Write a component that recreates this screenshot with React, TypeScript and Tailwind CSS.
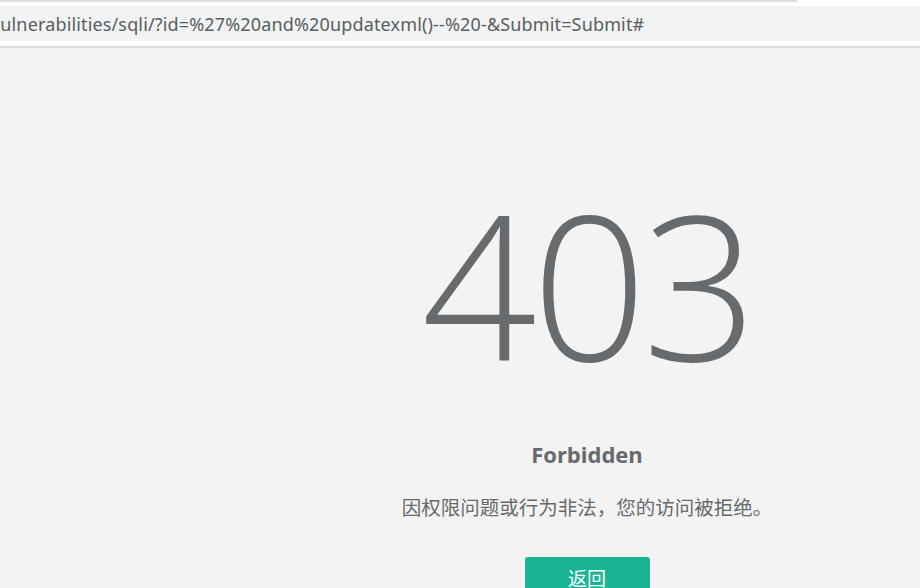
export default function App() {
  return (
    <div className="w-[920px] h-[588px] overflow-hidden bg-[#f3f3f3] flex flex-col">
      <div className="bg-white flex flex-col shrink-0">
        <div className="h-[2px] w-[797px] bg-[#dcdde0]" />
        <div className="h-[4px]" />
        <div
          className="h-[35px] bg-[#f1f3f4] flex items-center whitespace-nowrap overflow-hidden text-[18px] tracking-[0.15px] text-[#5a5d61] ml-[-9px] pt-[1px]"
          style={{ fontFamily: '"Noto Sans", "Open Sans", sans-serif' }}
        >
          vulnerabilities/sqli/?id=%27%20and%20updatexml()--%20-&amp;Submit=Submit#
        </div>
        <div className="h-[5px]" />
        <div className="h-[2px] bg-[#dadbde]" />
      </div>
      <div
        className="flex-1 flex flex-col items-center pl-[254px]"
        style={{ fontFamily: '"Open Sans", "Noto Sans", "Noto Sans CJK SC", sans-serif' }}
      >
        <div className="mt-[135px] h-[200px] flex items-center text-[202px] font-light leading-none text-[#686b6e] tracking-[-5px] pr-[-5px]">
          403
        </div>
        <div className="mt-[56px] text-[22px] font-bold text-[#676a6c] leading-[30px]">Forbidden</div>
        <div
          className="mt-[24px] text-[19.5px] text-[#676a6c] leading-[28px]"
          style={{ fontFamily: '"Noto Sans CJK SC", sans-serif' }}
        >
          因权限问题或行为非法，您的访问被拒绝。
        </div>
        <button
          className="mt-[36px] w-[125px] h-[40px] shrink-0 rounded-[3px] bg-[#1ab394] text-white text-[19px] leading-none"
          style={{ fontFamily: '"Noto Sans CJK SC", sans-serif' }}
        >
          返回
        </button>
      </div>
    </div>
  );
}
